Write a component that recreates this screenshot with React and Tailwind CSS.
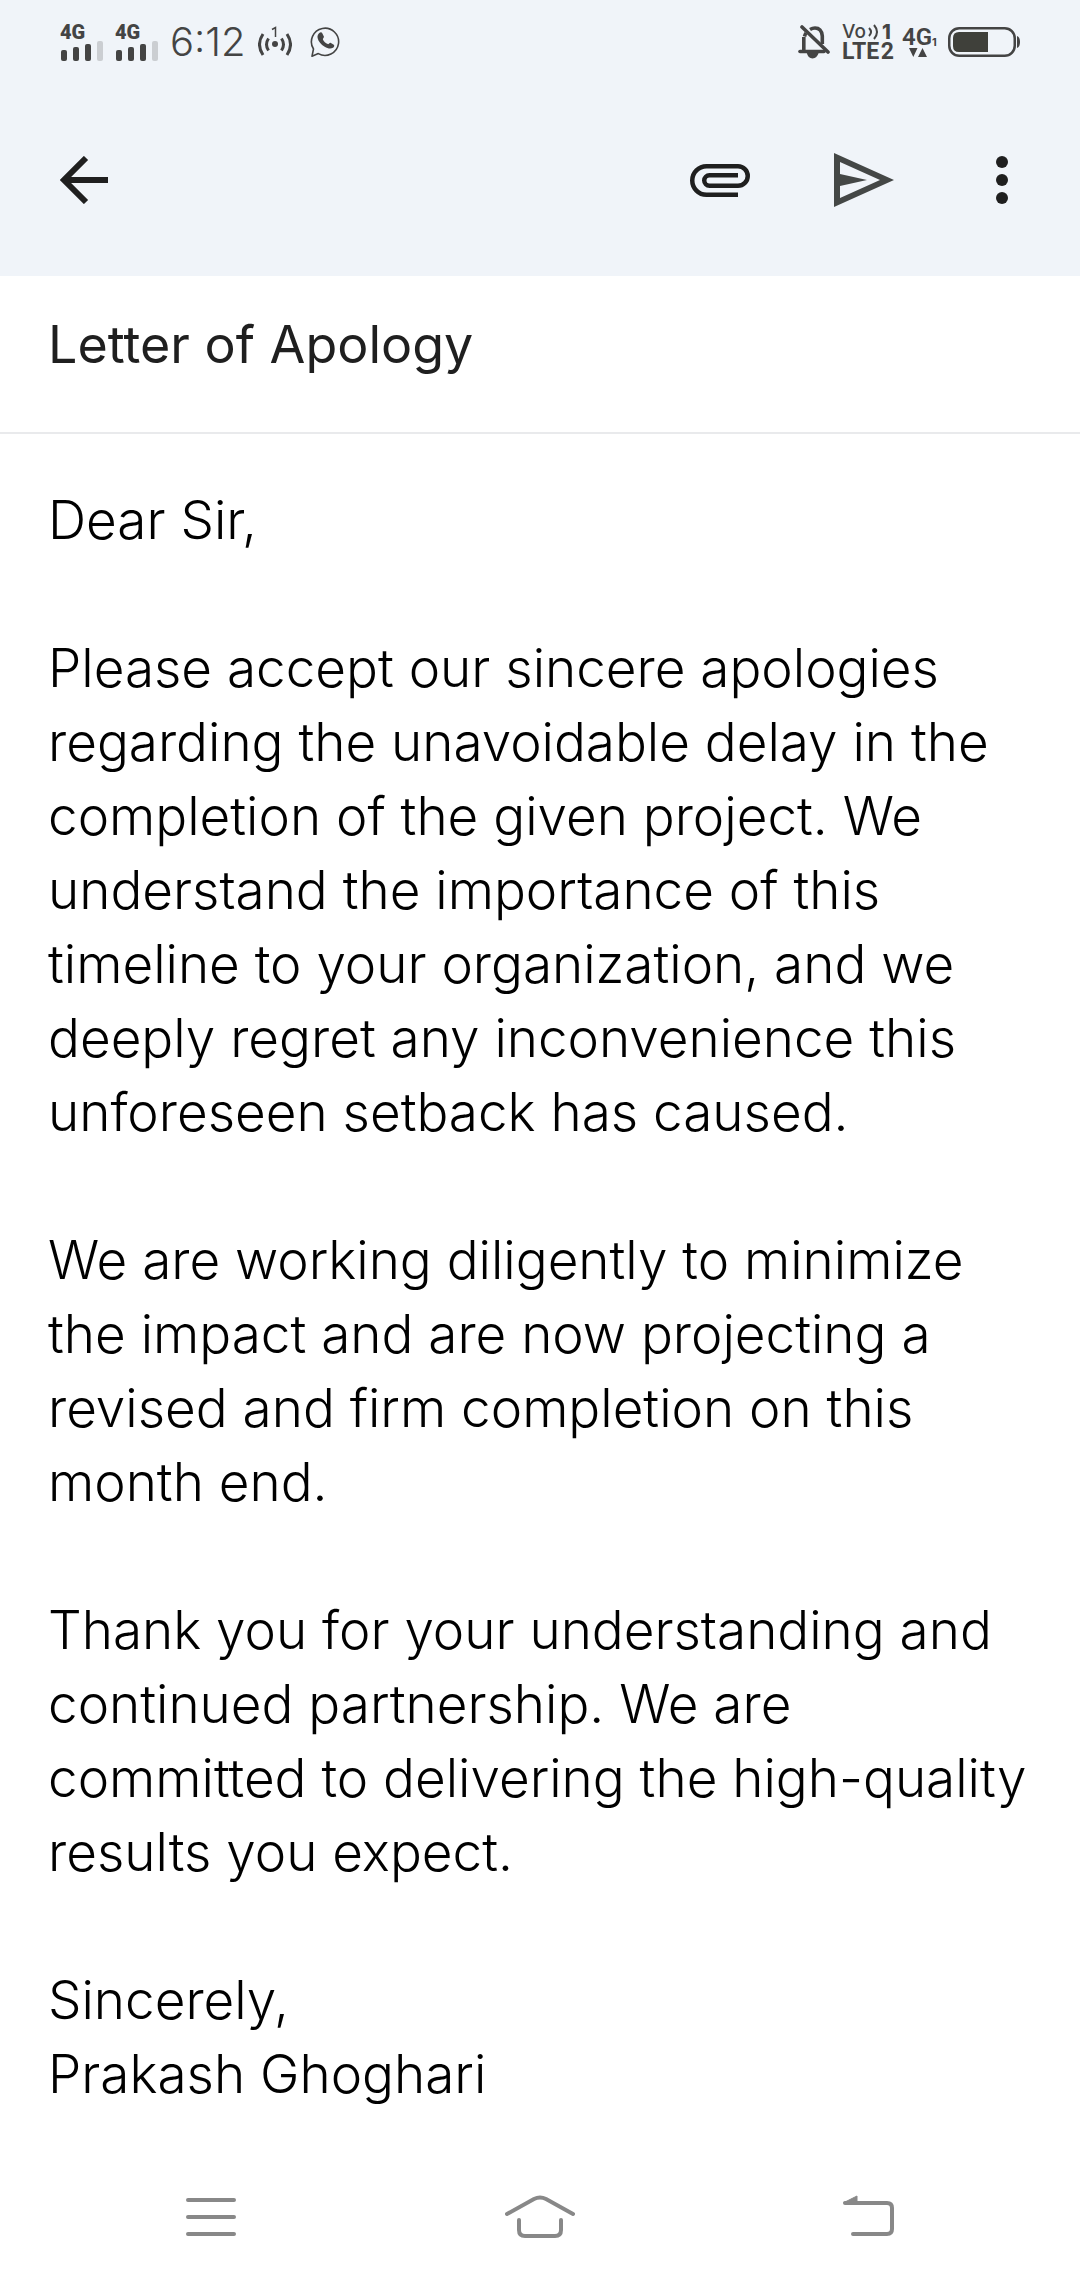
const LETTER = `Dear Sir,

Please accept our sincere apologies regarding the unavoidable delay in the completion of the given project. We understand the importance of this timeline to your organization, and we deeply regret any inconvenience this unforeseen setback has caused.

We are working diligently to minimize the impact and are now projecting a revised and firm completion on this month end.

Thank you for your understanding and continued partnership. We are committed to delivering the high-quality results you expect.

Sincerely,
Prakash Ghoghari`;

function Signal() {
  return (
    <div className="flex w-[43px] flex-col">
      <span className="font-['Roboto',sans-serif] text-[20px] leading-[18px] font-black">4G</span>
      <div className="flex h-5 items-end gap-[6px] pl-px">
        <span className="h-[11px] w-[6px] shrink-0 rounded-[2px] bg-[#444]" />
        <span className="h-[14px] w-[6px] shrink-0 rounded-[2px] bg-[#444]" />
        <span className="h-[17px] w-[6px] shrink-0 rounded-[2px] bg-[#444]" />
        <span className="h-[20px] w-[6px] shrink-0 rounded-[2px] bg-[#cbced2]" />
      </div>
    </div>
  );
}

function Hotspot() {
  return (
    <svg width="34" height="32" viewBox="0 0 34 32" fill="none" stroke="currentColor" strokeWidth="3">
      <circle cx="17" cy="18" r="3" fill="currentColor" stroke="none" />
      <path d="M14 3.500l3.500-2V11" strokeWidth="1.500" />
      <path d="M10.500 12.500q-4 6 0 12M23.500 12.500q4 6 0 12M5 8q-7 10.500 0 21M29 8q7 10.500 0 21" />
    </svg>
  );
}

function WhatsApp() {
  return (
    <svg width="30" height="32" viewBox="0 0 30 32" fill="none" stroke="currentColor">
      <path
        d="M2 30.200l1.500-7.200A13.600 13.600 0 1 1 8.300 27.600Z"
        strokeWidth="1.600"
        strokeLinejoin="round"
      />
      <path
        d="M9.300 7c.9-1 2.300-1 2.700-.2l1.900 3.800c.4.900-1.300 2.200-1 2.900 1 2.300 2.600 3.800 4.900 4.600.8.300 1.900-1.700 2.700-1.300l3.300 1.900c1 .7.300 2.400-.8 3.100-2.400 1.500-5.400.8-8.300-1C11 18.500 8.300 15.300 7.600 12c-.4-2 .3-3.800 1.700-5Z"
        fill="currentColor"
        stroke="none"
      />
    </svg>
  );
}

function BellOff() {
  return (
    <svg width="32" height="36" viewBox="0 0 32 36" fill="none" stroke="currentColor" strokeWidth="3.600">
      <path d="M5.800 28V13M12 5.500Q14.500 4 17 4q6.500 0 7.300 8v8M6.500 12.500Q7 10.500 8 9" />
      <path d="M2 27.500h24" strokeLinecap="round" />
      <path d="M8.500 28q1.500 6.500 6 6.500t6.500-6.500Z" fill="currentColor" stroke="none" />
      <path d="M4 3l26 25" stroke="currentColor" strokeLinecap="round" />
    </svg>
  );
}

function VoLte() {
  return (
    <div className="flex w-[52px] flex-col">
      <div className="flex h-5 items-center justify-between">
        <span className="text-[19px] leading-5 font-medium">Vo</span>
        <svg width="11" height="16" viewBox="0 0 11 16" fill="none" stroke="currentColor" strokeWidth="2">
          <path d="M1 4q4 4 0 8M6 1q6 7 0 14" />
        </svg>
        <span className="w-3 text-[20px] leading-5 font-extrabold">1</span>
      </div>
      <div className="flex h-5 items-center justify-between">
        <span className="font-['Roboto',sans-serif] text-[23px] leading-5 font-bold">LTE</span>
        <span className="font-['Roboto',sans-serif] text-[23px] leading-5 font-bold">2</span>
      </div>
    </div>
  );
}

function DataLink() {
  return (
    <div className="flex w-[34px] flex-col items-start">
      <div className="flex h-[22px] items-end">
        <span className="font-['Roboto',sans-serif] text-[24px] leading-[22px] font-semibold">4G</span>
        <span className="text-[11px] leading-[12px] font-bold">1</span>
      </div>
      <svg className="ml-[7px]" width="18" height="10" viewBox="0 0 18 10" fill="currentColor">
        <path d="M0 0h8.500L4.300 9ZM9 9h9L13.500 0Z" />
      </svg>
    </div>
  );
}

function Battery() {
  return (
    <svg width="72" height="32" viewBox="0 0 72 32">
      <rect x="1.250" y="2.250" width="65.500" height="27.500" rx="10" fill="none" stroke="#444" strokeWidth="2.500" />
      <path d="M11 6h29v20H11q-6 0-6-6v-8q0-6 6-6Z" fill="#3f403a" />
      <path d="M69 10q3 1 3 6t-3 6Z" fill="#444" />
    </svg>
  );
}

export default function App() {
  return (
    <div className="flex min-h-screen w-full flex-col bg-white font-['Inter',sans-serif]">
      <header className="bg-[#f0f4f9]">
        <div className="flex h-[84px] items-center justify-between px-[60px] text-[#444]">
          <div className="flex items-center">
            <Signal />
            <div className="ml-3">
              <Signal />
            </div>
            <time className="ml-3 text-[40px] leading-[40px] font-light">6:12</time>
            <div className="ml-3">
              <Hotspot />
            </div>
            <div className="ml-[18px]">
              <WhatsApp />
            </div>
          </div>
          <div className="flex items-center">
            <BellOff />
            <div className="ml-3">
              <VoLte />
            </div>
            <div className="ml-2">
              <DataLink />
            </div>
            <div className="ml-3">
              <Battery />
            </div>
          </div>
        </div>

        <div className="flex h-[192px] items-center justify-between px-[42px] text-[#1f1f1f]">
          <button type="button" aria-label="Back" className="flex size-[84px] items-center justify-center">
            <svg width="48" height="48" viewBox="0 0 48 48" fill="none" stroke="currentColor" strokeWidth="6">
              <path d="M48 24H5M26 2L4 24l22 22" />
            </svg>
          </button>
          <div className="flex items-center gap-[60px]">
            <button type="button" aria-label="Attach file" className="flex size-[84px] items-center justify-center">
              <svg width="60" height="34" viewBox="0 0 60 34" fill="none" stroke="currentColor" strokeWidth="4.500">
                <path d="M48 31.750H16.500a14.250 14.250 0 0 1 0-28.500H48a9.750 9.750 0 0 1 0 19.500H19.500a5.250 5.250 0 0 1 0-10.500H48" />
              </svg>
            </button>
            <button type="button" aria-label="Send" className="flex size-[84px] items-center justify-center text-[#444746]">
              <svg width="60" height="54" viewBox="0 0 60 54" fill="currentColor">
                <path fillRule="evenodd" d="M0 0L60 27L0 54ZM6 9V21L33 27L6 33V45L46 27Z" />
              </svg>
            </button>
            <button type="button" aria-label="More options" className="flex h-[84px] w-[72px] items-center justify-center">
              <svg width="12" height="48" viewBox="0 0 12 48" fill="currentColor">
                <circle cx="6" cy="6" r="6" />
                <circle cx="6" cy="24" r="6" />
                <circle cx="6" cy="42" r="6" />
              </svg>
            </button>
          </div>
        </div>
      </header>

      <main className="flex grow flex-col">
        <div className="border-b-2 border-[#e9eaec] px-12 pt-[33px] pb-[51px]">
          <input
            type="text"
            aria-label="Subject"
            defaultValue="Letter of Apology"
            className="block h-[72px] w-full text-[52px] leading-[72px] text-[#1f1f1f] outline-none"
          />
        </div>
        <textarea
          aria-label="Message"
          defaultValue={LETTER}
          spellCheck={false}
          className="block field-sizing-content w-full resize-none overflow-hidden pt-[49px] pr-10 pl-12 text-[53px] leading-[74px] font-light text-black outline-none"
        />
      </main>

      <nav aria-label="System" className="grid h-[126px] grid-cols-3 items-center px-[46px] text-[#888]">
        <button type="button" aria-label="Recent apps" className="flex justify-center">
          <svg width="50" height="44" viewBox="0 0 50 44" fill="none" stroke="currentColor" strokeWidth="4" strokeLinecap="round">
            <path d="M2 5h46M2 22h46M2 39h46" />
          </svg>
        </button>
        <button type="button" aria-label="Home" className="flex justify-center">
          <svg width="70" height="44" viewBox="0 0 70 44" fill="none" stroke="currentColor" strokeWidth="4" strokeLinecap="round" strokeLinejoin="round">
            <path d="M2 19L29 4Q35 1 41 4L68 19M14 25V35Q14 41 20 41H50Q56 41 56 35V25" />
          </svg>
        </button>
        <button type="button" aria-label="Previous" className="flex justify-center">
          <svg width="52" height="44" viewBox="0 0 52 44" fill="none" stroke="currentColor" strokeWidth="4" strokeLinecap="round">
            <path d="M2 8H44Q49 8 49 13V34Q49 39 44 39H10" />
            <path d="M1 7.500L14 1V8H2Z" fill="currentColor" strokeWidth="1" />
          </svg>
        </button>
      </nav>
    </div>
  );
}
